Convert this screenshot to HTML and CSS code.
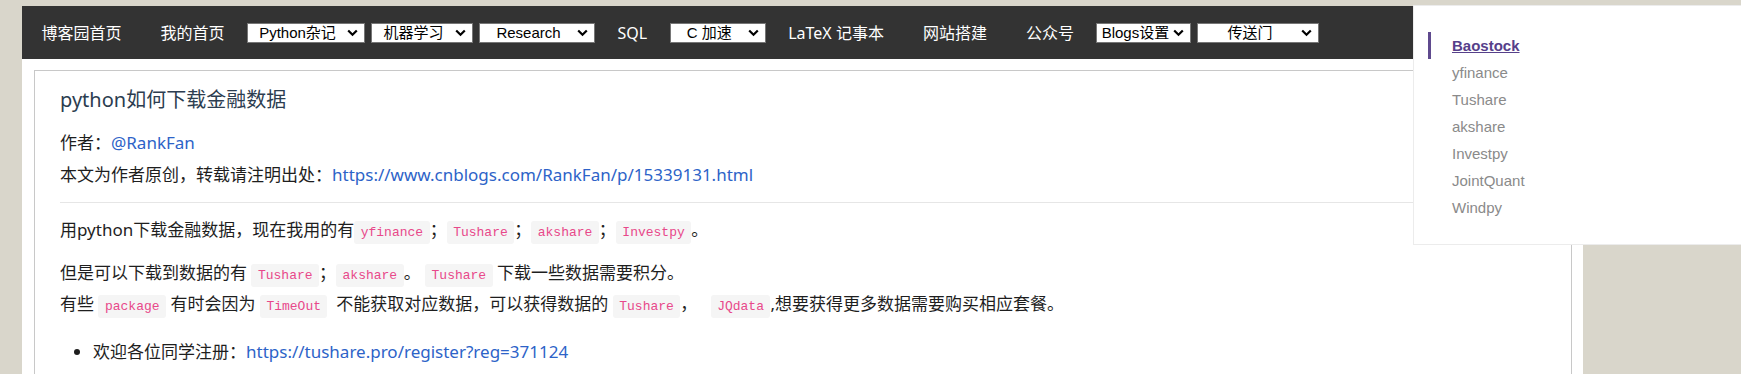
FILE: index.html
```html
<!DOCTYPE html>
<html lang="zh-CN">
<head>
<meta charset="utf-8">
<title>python如何下载金融数据</title>
<link rel="stylesheet" href="styles.css">
</head>
<body>
<div class="page">
  <nav class="nav">
    <a class="nav-link" href="#">博客园首页</a>
    <a class="nav-link" href="#">我的首页</a>
    <span class="sel sel-python"><span class="sel-text">Python杂记</span><svg viewBox="0 0 11 8"><path d="M1.2 1.5 L5.5 5.8 L9.8 1.5" fill="none" stroke="#000" stroke-width="2.2"/></svg></span>
    <span class="sel sel-ml"><span class="sel-text">机器学习</span><svg viewBox="0 0 11 8"><path d="M1.2 1.5 L5.5 5.8 L9.8 1.5" fill="none" stroke="#000" stroke-width="2.2"/></svg></span>
    <span class="sel sel-research"><span class="sel-text">Research</span><svg viewBox="0 0 11 8"><path d="M1.2 1.5 L5.5 5.8 L9.8 1.5" fill="none" stroke="#000" stroke-width="2.2"/></svg></span>
    <a class="nav-link" href="#">SQL</a>
    <span class="sel sel-c"><span class="sel-text">C 加速</span><svg viewBox="0 0 11 8"><path d="M1.2 1.5 L5.5 5.8 L9.8 1.5" fill="none" stroke="#000" stroke-width="2.2"/></svg></span>
    <a class="nav-link" href="#">LaTeX 记事本</a>
    <a class="nav-link" href="#">网站搭建</a>
    <a class="nav-link" href="#">公众号</a>
    <span class="sel sel-blogs"><span class="sel-text">Blogs设置</span><svg viewBox="0 0 11 8"><path d="M1.2 1.5 L5.5 5.8 L9.8 1.5" fill="none" stroke="#000" stroke-width="2.2"/></svg></span>
    <span class="sel sel-portal"><span class="sel-text">传送门</span><svg viewBox="0 0 11 8"><path d="M1.2 1.5 L5.5 5.8 L9.8 1.5" fill="none" stroke="#000" stroke-width="2.2"/></svg></span>
  </nav>

  <article class="post">
    <h1 class="post-title">python如何下载金融数据</h1>
    <div class="meta">
      <div>作者：<a href="#">@RankFan</a></div>
      <div>本文为作者原创，转载请注明出处：<a href="#">https://www.cnblogs.com/RankFan/p/15339131.html</a></div>
    </div>
    <hr class="rule">
    <p class="para">用python下载金融数据，现在我用的有<code class="code">yfinance</code>；<code class="code">Tushare</code>；<code class="code">akshare</code>；<code class="code">Investpy</code>。</p>
    <p class="para">但是可以下载到数据的有 <code class="code">Tushare</code>；<code class="code">akshare</code>。 <code class="code">Tushare</code> 下载一些数据需要积分。<br>有些 <code class="code">package</code> 有时会因为 <code class="code">TimeOut</code>&nbsp; 不能获取对应数据，可以获得数据的 <code class="code">Tushare</code>，&nbsp;&nbsp; <code class="code">JQdata</code>,想要获得更多数据需要购买相应套餐。</p>
    <ul class="list">
      <li>欢迎各位同学注册：<a href="#">https://tushare.pro/register?reg=371124</a></li>
    </ul>
  </article>
</div>

<aside class="toc">
  <ul class="toc-list">
    <li class="toc-item active"><a href="#">Baostock</a></li>
    <li class="toc-item"><a href="#">yfinance</a></li>
    <li class="toc-item"><a href="#">Tushare</a></li>
    <li class="toc-item"><a href="#">akshare</a></li>
    <li class="toc-item"><a href="#">Investpy</a></li>
    <li class="toc-item"><a href="#">JointQuant</a></li>
    <li class="toc-item"><a href="#">Windpy</a></li>
  </ul>
</aside>
</body>
</html>
```
FILE: styles.css
```css
html, body {
  margin: 0;
  overflow: hidden;
}

body {
  background: #d9d6cb;
  padding: 6px 0 0 22px;
  font-family: "Noto Sans", "Noto Sans CJK SC", sans-serif;
  height: 374px;
  box-sizing: border-box;
}

a {
  color: #2d63c8;
  text-decoration: none;
}

.page {
  width: 1561px;
  min-height: 420px;
  background: #fff;
}

/* ---------- top navigation ---------- */
.nav {
  display: flex;
  align-items: center;
  height: 53px;
  background: #333;
}

.nav-link {
  color: #fff;
  font-size: 16px;
  line-height: 20px;
  padding: 0 19.5px;
  white-space: nowrap;
}

.sel {
  display: flex;
  align-items: center;
  box-sizing: border-box;
  height: 20px;
  margin: 0 3px;
  padding-right: 6px;
  border: 1px solid #767676;
  background: #fff;
  color: #000;
  font-family: "Liberation Sans", "Noto Sans CJK SC", sans-serif;
  font-size: 15px;
}

.sel-text {
  flex: 1;
  text-align: center;
  white-space: nowrap;
  line-height: 18px;
}

.sel svg {
  flex: none;
  width: 11px;
  height: 8px;
}

.sel-python { width: 118px; }
.sel-ml { width: 102px; }
.sel-research { width: 116px; }
.sel-c { width: 96px; }
.sel-blogs { width: 95px; }
.sel-portal { width: 122px; }

/* ---------- post card ---------- */
.post {
  display: block;
  margin: 11px 11px 0 12px;
  border: 1px solid #c8c8c8;
  padding: 14px 25px 60px 25px;
  color: #1e1e1e;
  font-size: 17px;
  line-height: 31px;
}

.post-title {
  margin: 0;
  font-size: 20px;
  line-height: 30px;
  font-weight: normal;
  color: #2c3d50;
}

.meta {
  margin-top: 12px;
  line-height: 32px;
}

.rule {
  margin: 11px 0 0;
  height: 0;
  border: 0;
  border-top: 1px solid #e6e6e6;
}

.para {
  margin: 11px 0 0;
}

.para + .para {
  margin-top: 12px;
}

.code {
  font-family: "Liberation Mono", monospace;
  font-size: 13px;
  line-height: 1;
  color: #e8488a;
  background: #f5f5f5;
  padding: 4px 6.5px;
  border-radius: 3px;
}

.list {
  margin: 17px 0 0;
  padding-left: 33px;
}

/* ---------- floating table of contents ---------- */
.toc {
  position: fixed;
  top: 5px;
  left: 1413px;
  right: 0;
  height: 240px;
  box-sizing: border-box;
  background: #fff;
  border: 1px solid #ececec;
  border-right: 0;
  padding: 26px 0 0 14px;
  font-family: "Liberation Sans", Arial, sans-serif;
  font-size: 15px;
}

.toc-list {
  list-style: none;
  margin: 0;
  padding: 0;
}

.toc-item {
  border-left: 3px solid transparent;
  padding-left: 21px;
  line-height: 27px;
}

.toc-item a {
  color: #8a8a8a;
}

.toc-item.active {
  border-left-color: #5f4a8e;
}

.toc-item.active a {
  color: #56408a;
  font-weight: bold;
  text-decoration: underline;
}
```
